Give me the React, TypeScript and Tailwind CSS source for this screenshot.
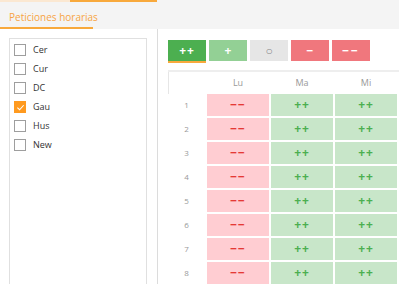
import React from "react";

const names = ["Cer", "Cur", "DC", "Gau", "Hus", "New"];
const rows = [1, 2, 3, 4, 5, 6, 7, 8];

function Check({ checked }: { checked: boolean }) {
  if (checked) {
    return (
      <div className="w-[12px] h-[12px] bg-[#ff9a1f] flex items-center justify-center shrink-0">
        <svg width="9" height="9" viewBox="0 0 10 10">
          <path d="M1.5 5.2 L4 7.5 L8.5 2.5" fill="none" stroke="white" strokeWidth="1.2" />
        </svg>
      </div>
    );
  }
  return <div className="w-[12px] h-[12px] border border-[#9e9e9e] bg-white shrink-0" />;
}

export default function App() {
  return (
    <div className="w-[399px] h-[284px] overflow-hidden bg-white font-['Open_Sans',sans-serif] relative">
      {/* top tab bar */}
      <div className="h-[29px] bg-[#f4f4f4] relative">
        <div className="flex h-[2px]">
          <div className="w-[70px] bg-[#fbe8d2]" />
          <div className="w-[87px] bg-[#f8a93c]" />
        </div>
        <div className="pl-[9px] pt-[8px] text-[10px] leading-[14px] text-[#f7a445]">Peticiones horarias</div>
        <div className="absolute left-0 bottom-0 w-[93px] h-[2px] bg-[#f8a93c]" />
      </div>
      <div className="flex h-[255px]">
        {/* left column */}
        <div className="w-[157px] shrink-0 pl-[9px] pr-[10px] pt-[9px]">
          <div className="border border-[#e0e0e0] h-[300px] pl-[4px] pt-[5px] flex flex-col gap-[7px]">
            {names.map((n) => (
              <div key={n} className="flex items-center h-[12px]">
                <Check checked={n === "Gau"} />
                <span className="ml-[7px] text-[9px] text-[#333]">{n}</span>
              </div>
            ))}
          </div>
        </div>
        <div className="w-[1px] shrink-0 bg-[#dcdcdc] h-full" />
        {/* right panel */}
        <div className="flex-1 min-w-0 overflow-hidden pl-[10px] pt-[11px]">
          <div className="flex gap-[3px]">
            <div className="w-[38px] h-[23px] shrink-0 bg-[#4caf50] border-b-2 border-[#f8a93c] flex items-center justify-center text-white text-[12px] font-bold tracking-[1px]">++</div>
            <div className="w-[38px] h-[21px] shrink-0 bg-[#93d095] flex items-center justify-center text-white text-[12px] font-bold">+</div>
            <div className="w-[38px] h-[21px] shrink-0 bg-[#e6e6e6] flex items-center justify-center text-[#888] text-[12px]">○</div>
            <div className="w-[38px] h-[21px] shrink-0 bg-[#f0777d] flex items-center justify-center text-white text-[12px] font-bold">−</div>
            <div className="w-[38px] h-[21px] shrink-0 bg-[#f0777d] flex items-center justify-center text-white text-[12px] font-bold tracking-[2px]">−−</div>
          </div>
          <div className="mt-[7px] border-t-2 border-[#eeeeee] w-[300px]">
            <div className="grid grid-cols-[37px_62px_62px_62px_62px] gap-x-[2px] h-[22px] items-center text-[9px] text-[#999]">
              <div className="h-full border-l border-[#e6e6e6]" />
              <div className="text-center">Lu</div>
              <div className="text-center">Ma</div>
              <div className="text-center">Mi</div>
              <div />
            </div>
            <div className="flex flex-col gap-[2px]">
              {rows.map((r) => (
                <div key={r} className="grid grid-cols-[37px_62px_62px_62px_62px] gap-x-[2px] h-[22px]">
                  <div className="flex items-center justify-center text-[8px] text-[#999]">{r}</div>
                  <div className="bg-[#ffcdd2] flex items-center justify-center text-[#e53935] text-[12px] font-bold tracking-[1px]">−−</div>
                  <div className="bg-[#c8e6c9] flex items-center justify-center text-[#4caf50] text-[12px] font-bold tracking-[1px]">++</div>
                  <div className="bg-[#c8e6c9] flex items-center justify-center text-[#4caf50] text-[12px] font-bold tracking-[1px]">++</div>
                  <div className="bg-[#c8e6c9]" />
                </div>
              ))}
            </div>
          </div>
        </div>
      </div>
    </div>
  );
}
